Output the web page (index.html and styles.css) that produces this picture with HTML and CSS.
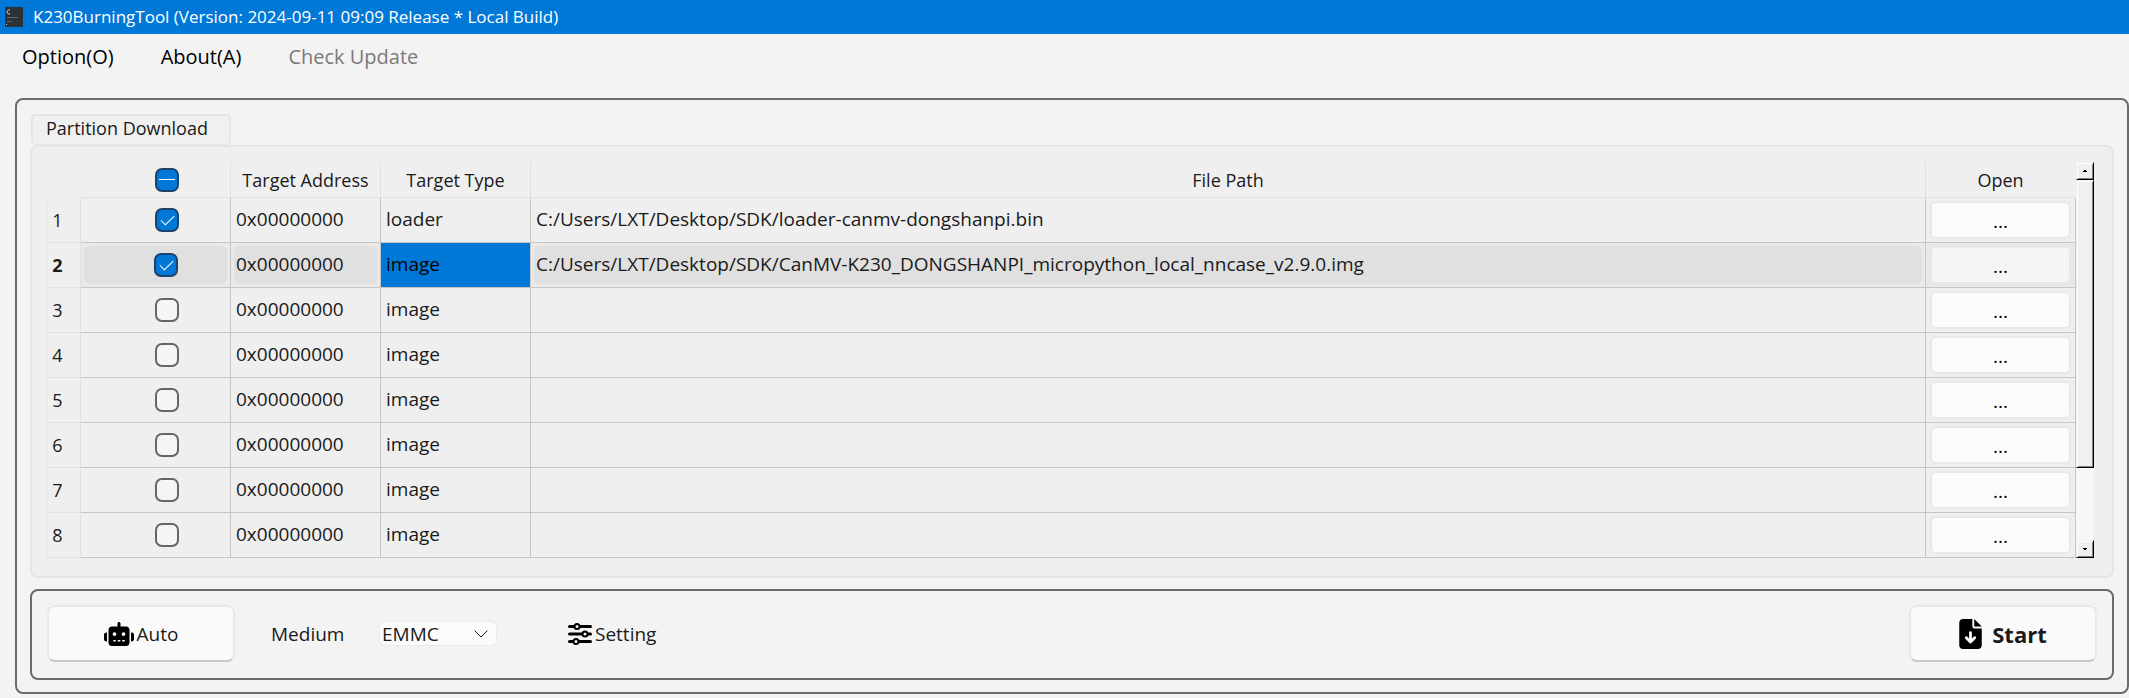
FILE: index.html
```
<!DOCTYPE html>
<html lang="en">
<head>
<meta charset="UTF-8" />
<title>K230BurningTool</title>
<link rel="stylesheet" href="styles.css">
</head>
<body>

<header class="titlebar">
  <svg class="app-icon" width="18" height="20" viewBox="0 0 18 20">
    <rect x="0" y="0" width="18" height="20" rx="1" fill="#2b3238"/>
    <path d="M5 3.200a2 2 0 1 0 0 3.400" fill="none" stroke="#c8ccd0" stroke-width="1"/>
    <path d="M2 10.500h11M2 14.500h5" stroke="#60676d" stroke-width="1"/>
    <rect x="1" y="17" width="1" height="1" fill="#c8ccd0"/>
  </svg>
  <span>K230BurningTool (Version: 2024-09-11 09:09 Release * Local Build)</span>
</header>

<nav class="menu">
  <button type="button">Option(O)</button>
  <button type="button">About(A)</button>
  <button type="button" disabled>Check Update</button>
</nav>

<main class="frame">
  <div class="tabs">
    <button type="button" class="tab">Partition Download</button>
  </div>

  <section class="panel">
    <table class="parts">
      <colgroup>
        <col class="c-num"><col class="c-std"><col class="c-std"><col class="c-std"><col><col class="c-std">
      </colgroup>
      <thead>
        <tr>
          <th class="corner"></th>
          <th class="sel"><input type="checkbox" id="all" class="check" aria-label="Select all"></th>
          <th>Target Address</th>
          <th>Target Type</th>
          <th>File Path</th>
          <th>Open</th>
        </tr>
      </thead>
      <tbody>
        <tr>
          <th>1</th>
          <td class="sel"><input type="checkbox" class="check" aria-label="Partition 1" checked></td>
          <td>0x00000000</td>
          <td>loader</td>
          <td>C:/Users/LXT/Desktop/SDK/loader-canmv-dongshanpi.bin</td>
          <td class="open"><button type="button">...</button></td>
        </tr>
        <tr class="current">
          <th>2</th>
          <td class="sel"><div class="hl"><input type="checkbox" class="check" aria-label="Partition 2" checked></div></td>
          <td><div class="hl">0x00000000</div></td>
          <td class="active">image</td>
          <td><div class="hl">C:/Users/LXT/Desktop/SDK/CanMV-K230_DONGSHANPI_micropython_local_nncase_v2.9.0.img</div></td>
          <td class="open"><button type="button">...</button></td>
        </tr>
        <tr>
          <th>3</th>
          <td class="sel"><input type="checkbox" class="check" aria-label="Partition 3"></td>
          <td>0x00000000</td>
          <td>image</td>
          <td></td>
          <td class="open"><button type="button">...</button></td>
        </tr>
        <tr>
          <th>4</th>
          <td class="sel"><input type="checkbox" class="check" aria-label="Partition 4"></td>
          <td>0x00000000</td>
          <td>image</td>
          <td></td>
          <td class="open"><button type="button">...</button></td>
        </tr>
        <tr>
          <th>5</th>
          <td class="sel"><input type="checkbox" class="check" aria-label="Partition 5"></td>
          <td>0x00000000</td>
          <td>image</td>
          <td></td>
          <td class="open"><button type="button">...</button></td>
        </tr>
        <tr>
          <th>6</th>
          <td class="sel"><input type="checkbox" class="check" aria-label="Partition 6"></td>
          <td>0x00000000</td>
          <td>image</td>
          <td></td>
          <td class="open"><button type="button">...</button></td>
        </tr>
        <tr>
          <th>7</th>
          <td class="sel"><input type="checkbox" class="check" aria-label="Partition 7"></td>
          <td>0x00000000</td>
          <td>image</td>
          <td></td>
          <td class="open"><button type="button">...</button></td>
        </tr>
        <tr>
          <th>8</th>
          <td class="sel"><input type="checkbox" class="check" aria-label="Partition 8"></td>
          <td>0x00000000</td>
          <td>image</td>
          <td></td>
          <td class="open"><button type="button">...</button></td>
        </tr>
      </tbody>
    </table>

    <div class="scrollbar">
      <button type="button" class="arrow" aria-label="Scroll up"><svg width="4" height="2" viewBox="0 0 4 2"><path d="M1 0h2v1h1v1H0V1h1z"/></svg></button>
      <div class="thumb"></div>
      <div class="track"></div>
      <button type="button" class="arrow" aria-label="Scroll down"><svg width="4" height="2" viewBox="0 0 4 2"><path d="M0 0h4v1H3v1H1V1H0z"/></svg></button>
    </div>
  </section>

  <section class="toolbar">
    <button type="button" class="big">
      <svg width="30" height="24" viewBox="0 0 640 512"><path d="M320 0c17.700 0 32 14.300 32 32v64h120c39.800 0 72 32.200 72 72v272c0 39.800-32.200 72-72 72H168c-39.800 0-72-32.200-72-72V168c0-39.800 32.200-72 72-72h120V32c0-17.700 14.300-32 32-32zM208 384c-8.800 0-16 7.200-16 16s7.200 16 16 16h32c8.800 0 16-7.200 16-16s-7.200-16-16-16h-32zm96 0c-8.800 0-16 7.200-16 16s7.200 16 16 16h32c8.800 0 16-7.200 16-16s-7.200-16-16-16h-32zm96 0c-8.800 0-16 7.200-16 16s7.200 16 16 16h32c8.800 0 16-7.200 16-16s-7.200-16-16-16h-32zM264 256a40 40 0 1 0-80 0 40 40 0 1 0 80 0zm152 40a40 40 0 1 0 0-80 40 40 0 1 0 0 80zM48 224h16v192H48c-26.500 0-48-21.500-48-48v-96c0-26.500 21.500-48 48-48zm544 0c26.500 0 48 21.500 48 48v96c0 26.500-21.500 48-48 48h-16V224h16z"/></svg>
      <span>Auto</span>
    </button>
    <label for="medium" class="medium">Medium</label>
    <select id="medium">
      <option>EMMC</option>
      <option>SD Card</option>
    </select>
    <button type="button" class="setting">
      <svg width="24" height="24" viewBox="0 0 24 24" fill="none" stroke="#000" stroke-width="3" stroke-linecap="round"><path d="M1.500 4.500h21M1.500 12h21M1.500 19.500h21"/><g fill="#f3f3f3" stroke-width="2"><circle cx="9" cy="4.500" r="2.500"/><circle cx="17" cy="12" r="2.500"/><circle cx="8" cy="19.500" r="2.500"/></g></svg>
      <span>Setting</span>
    </button>
    <button type="button" class="big start">
      <svg width="23" height="30" viewBox="0 0 384 512"><path d="M64 0C28.700 0 0 28.700 0 64v384c0 35.300 28.700 64 64 64h256c35.300 0 64-28.700 64-64V160H256c-17.700 0-32-14.300-32-32V0H64zm192 0v128h128L256 0zM216 232v102.100l31-31c9.400-9.400 24.600-9.400 33.900 0s9.400 24.600 0 33.900l-72 72c-9.400 9.400-24.600 9.400-33.900 0l-72-72c-9.400-9.400-9.400-24.600 0-33.900s24.600-9.400 33.900 0l31 31V232c0-13.300 10.700-24 24-24s24 10.700 24 24z"/></svg>
      <span>Start</span>
    </button>
  </section>
</main>

<script>
  // some partitions are ticked, so the header box is in its mixed state
  document.getElementById('all').indeterminate = true;
</script>

</body>
</html>
```
FILE: styles.css
```
* {
  box-sizing: border-box;
}
body {
  margin: 0;
  background: #f3f3f3;
  color: #1a1a1a;
  font-family: "Open Sans", "Noto Sans", sans-serif;
  font-size: 18px;
  line-height: 24px;
}
button, select {
  margin: 0;
  padding: 0;
  border: 0;
  background: none;
  color: inherit;
  font: inherit;
}
.titlebar {
  display: flex;
  align-items: center;
  gap: 10px;
  height: 34px;
  padding-left: 5px;
  background: #0078d7;
  color: #fff;
  font-size: 17px;
}
.menu {
  display: flex;
  align-items: center;
  gap: 47px;
  height: 46px;
  padding-left: 22px;
  color: #000;
  font-size: 20px;
}
.menu button:disabled {
  color: #7a7a7a;
}
.frame {
  margin: 18px 0 0 15px;
  padding: 14px 13px 12px;
  border: 2px solid #6b6b6b;
  border-radius: 8px;
}
.tabs {
  display: flex;
  padding-left: 1px;
}
.tab {
  width: 200px;
  height: 31px;
  padding: 0 0 4px 13px;
  border: 2px solid #e5e5e5;
  border-bottom-width: 1px;
  border-radius: 4px;
  background: #f0f0f0;
  text-align: left;
}
.panel {
  display: flex;
  padding: 15px 18px 18px 14px;
  border: 2px solid #e5e5e5;
  border-radius: 8px;
  background: #efefef;
}
.parts {
  flex: 1;
  table-layout: fixed;
  border-collapse: separate;
  border-spacing: 0;
}
.c-num {
  width: 35px;
}
.c-std {
  width: 150px;
}
.parts th {
  padding: 0;
  border-right: 1px solid #e0e0e0;
  border-bottom: 1px solid #e0e0e0;
  font-weight: normal;
}
.parts thead th {
  height: 36px;
}
.parts thead th:last-child {
  border-right-color: transparent;
}
.parts .corner {
  border-color: transparent;
}
.parts tbody th {
  padding-right: 12px;
  border-left: 1px solid #e5e5e5;
}
.parts td {
  height: 45px;
  padding: 0 5px 2px;
  border-right: 1px solid #c6c6c6;
  border-bottom: 1px solid #c6c6c6;
  font-size: 19px;
  white-space: nowrap;
}
.parts .sel {
  padding: 0 0 2px 22px;
  text-align: center;
}
.parts .open {
  padding: 3px 4px;
}
.open button {
  display: block;
  width: 100%;
  height: 38px;
  padding-top: 2px;
  border: 2px solid #e8e8e8;
  border-radius: 6px;
  background: #fbfbfb;
  color: #000;
}
.parts .current th {
  font-weight: bold;
}
.parts .current td {
  padding: 0 3px;
  background: #e9e9e9;
}
.hl {
  height: 38px;
  padding: 0 2px;
  border-radius: 6px;
  background: #e0e0e0;
  line-height: 36px;
}
.sel .hl {
  display: flex;
  align-items: center;
  justify-content: center;
  padding-left: 22px;
}
.parts .current .active {
  padding: 0 5px 2px;
  background: #0078d7;
  color: #000;
}
.parts .current .open {
  padding: 3px 4px;
}
.current .open button {
  background: #f5f5f5;
}
.check {
  appearance: none;
  display: inline-block;
  width: 24px;
  height: 24px;
  margin: 0;
  border: 2px solid #666;
  border-radius: 7px;
  background: #f5f5f5;
  vertical-align: middle;
}
.check:checked, .check:indeterminate {
  border-color: #1d4468;
  background: #0078d7;
}
.check:checked::before {
  content: "";
  display: block;
  width: 12px;
  height: 6px;
  margin: 5px 0 0 4px;
  border: solid #fff;
  border-width: 0 0 1px 1px;
  transform: rotate(-45deg);
}
.check:indeterminate::before {
  content: "";
  display: block;
  height: 1px;
  margin: 9px 2px 0;
  background: #fff;
}
.scrollbar {
  display: flex;
  flex-direction: column;
  width: 18px;
}
.arrow, .thumb {
  border: 1px solid;
  border-color: #f0f0f0 #000 #000 #f0f0f0;
  background: #f0f0f0;
  box-shadow: inset 1px 1px #fff, inset -1px -1px #808080;
}
.arrow {
  display: flex;
  align-items: center;
  justify-content: center;
  height: 18px;
}
.thumb {
  flex: 4;
}
.track {
  flex: 1;
  background: repeating-conic-gradient(#fff 0 25%, #f0f0f0 0 50%) 0 0 / 2px 2px;
}
.toolbar {
  display: flex;
  align-items: center;
  height: 91px;
  margin-top: 11px;
  padding: 0 15px 2px;
  border: 2px solid #6b6b6b;
  border-radius: 8px;
  font-size: 19px;
}
.big {
  display: flex;
  align-items: center;
  justify-content: center;
  gap: 3px;
  width: 188px;
  height: 57px;
  border: 2px solid #e9e9e9;
  border-bottom-color: #c8c8c8;
  border-radius: 8px;
  background: #fafafa;
}
.medium {
  width: 108px;
  margin-left: 36px;
}
#medium {
  appearance: none;
  width: 118px;
  height: 25px;
  padding-left: 2px;
  border: 1px solid #ebebeb;
  border-radius: 6px;
  background: #fbfbfb url("data:image/svg+xml,%3Csvg xmlns='http://www.w3.org/2000/svg' width='14' height='8' fill='none' stroke='%23222'%3E%3Cpath d='M.5.5 7 7 13.500.5'/%3E%3C/svg%3E") no-repeat right 8px center;
}
.setting {
  display: flex;
  align-items: center;
  gap: 3px;
  margin-left: 71px;
}
.start {
  gap: 10px;
  margin-left: auto;
  font-size: 22px;
  font-weight: bold;
}
```
